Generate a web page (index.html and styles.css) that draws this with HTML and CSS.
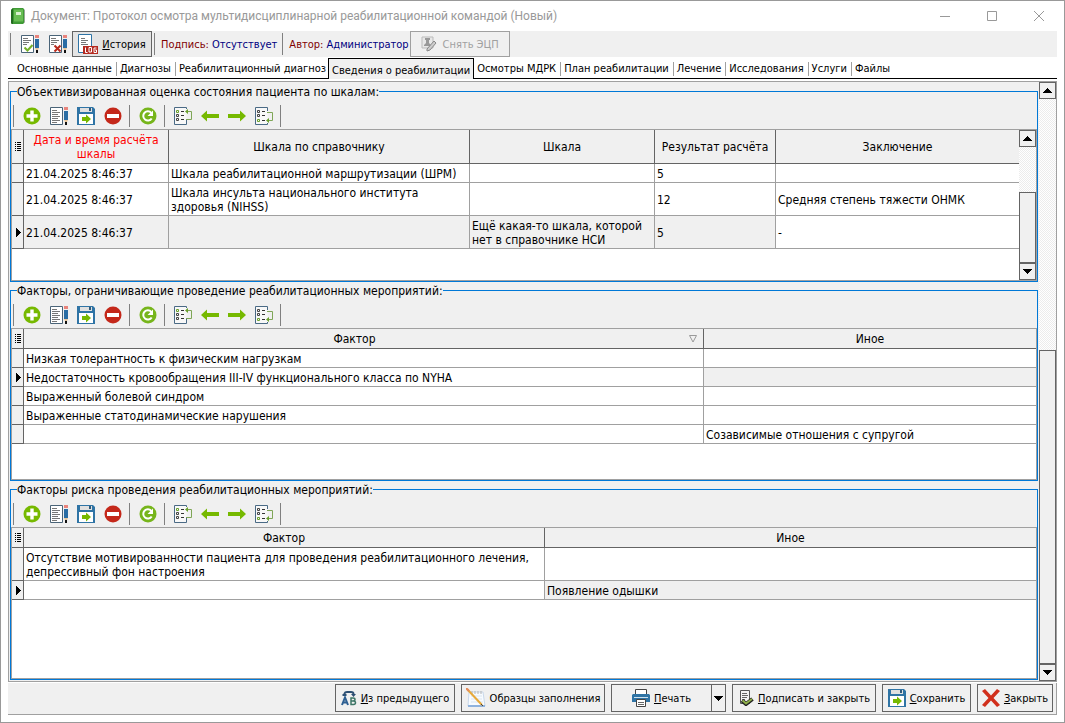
FILE: index.html
```html
<!DOCTYPE html>
<html lang="ru">
<head>
  <meta charset="UTF-8">
  <meta name="viewport" content="width=device-width, initial-scale=1.0">
  <title>Документ: Протокол осмотра</title>
  <link rel="stylesheet" href="styles.css">
</head>
<body>
  <!-- Icon set -->
  <svg class="icon-set" aria-hidden="true">
    <symbol id="i-add" viewBox="0 0 18 18">
      <circle cx="9" cy="9" r="8.5" fill="#76b900"/>
      <path d="M7.300 3.500h3.400v3.800h3.800v3.400h-3.800v3.800H7.300v-3.800H3.500V7.300h3.800z" fill="#fff"/>
    </symbol>
    <symbol id="i-edit" viewBox="0 0 18 18">
      <path d="M.5.5h12v17H.5z" fill="#fff" stroke="#4a6478"/>
      <path d="M2 3.500h5M2 5.500h8M2 7.500h6M2 9.500h8M2 11.500h6M2 13.500h8M2 15.500h5" stroke="#777"/>
      <path d="M14 0h4v3h-4z" fill="#e8847c"/>
      <path d="M14 4h4v9h-4z" fill="#2a6da4"/>
      <path d="M14 13h4l-1 2h-2z" fill="#e9c79a"/>
      <path d="M15 15h2v3h-2z" fill="#111"/>
    </symbol>
    <symbol id="i-edit-ok" viewBox="0 0 18 18">
      <path d="M.5.5h12v17H.5z" fill="#fff" stroke="#4a6478"/>
      <path d="M2 3.500h5M2 5.500h8M2 7.500h6M2 9.500h4" stroke="#777"/>
      <path d="M3.500 12.500l3 3 5-5.500" fill="none" stroke="#76b02a" stroke-width="2"/>
      <path d="M14 0h4v3h-4z" fill="#e8847c"/>
      <path d="M14 4h4v9h-4z" fill="#2a6da4"/>
      <path d="M14 13h4l-1 2h-2z" fill="#e9c79a"/>
      <path d="M15 15h2v3h-2z" fill="#111"/>
    </symbol>
    <symbol id="i-edit-no" viewBox="0 0 18 18">
      <path d="M.5.5h12v17H.5z" fill="#fff" stroke="#4a6478"/>
      <path d="M2 3.500h5M2 5.500h8M2 7.500h6M2 9.500h3" stroke="#777"/>
      <path d="M5.500 10.500l6 6M11.500 10.500l-6 6" stroke="#b82a1c" stroke-width="2"/>
      <path d="M14 0h4v3h-4z" fill="#e8847c"/>
      <path d="M14 4h4v9h-4z" fill="#2a6da4"/>
      <path d="M14 13h4l-1 2h-2z" fill="#e9c79a"/>
      <path d="M15 15h2v3h-2z" fill="#111"/>
    </symbol>
    <symbol id="i-save" viewBox="0 0 18 18">
      <path d="M0 0h16l2 2v16H0z" fill="#2f74a5"/>
      <path d="M3 1h12v4H3z" fill="#e0e0e0"/>
      <path d="M12 1h2v3h-2z" fill="#2f5a7a"/>
      <path d="M2 7h14v10H2z" fill="#fff"/>
      <path d="M5 10h4V7.500l5 4.500-5 4.500V14H5z" fill="#76b900"/>
    </symbol>
    <symbol id="i-remove" viewBox="0 0 18 18">
      <circle cx="9" cy="9" r="8.500" fill="#c4281a"/>
      <path d="M3 7h12v4H3z" fill="#fff"/>
    </symbol>
    <symbol id="i-refresh" viewBox="0 0 18 18">
      <circle cx="9" cy="9" r="8.500" fill="#76b51b"/>
      <path d="M12.700 11.500a4.600 4.600 0 1 1-.4-5.600" fill="none" stroke="#fff" stroke-width="2"/>
      <path d="M14 3.500v5.500H8.500z" fill="#fff"/>
    </symbol>
    <symbol id="i-first" viewBox="0 0 18 18">
      <path d="M12.500 2V.5H.5v17h12V13" fill="#f8f8f8" stroke="#4a6a85"/>
      <path d="M2.500 3.500h2v2h-2z" fill="none" stroke="#6aa12c"/>
      <path d="M2.500 7.500h2v2h-2zM2.500 11.500h2v2h-2z" fill="none" stroke="#444"/>
      <path d="M7 4.500h3M7 8.500h3M7 12.500h3" stroke="#333"/>
      <path d="M13 4.500h4.500v8H12" fill="none" stroke="#7fa657"/>
      <path d="M14 2v5l-3-2.500z" fill="#6aa12c"/>
    </symbol>
    <symbol id="i-last" viewBox="0 0 18 18">
      <path d="M12.500 4V.5H.5v17h12V16" fill="#f8f8f8" stroke="#4a6a85"/>
      <path d="M2.500 3.500h2v2h-2zM2.500 7.500h2v2h-2z" fill="none" stroke="#444"/>
      <path d="M2.500 12.500h2v2h-2z" fill="none" stroke="#6aa12c"/>
      <path d="M7 4.500h3M7 8.500h3M7 13.500h3" stroke="#333"/>
      <path d="M12 5.500h5.500v8H13" fill="none" stroke="#7fa657"/>
      <path d="M14 11v5l-3-2.500z" fill="#6aa12c"/>
    </symbol>
    <symbol id="i-prev" viewBox="0 0 18 18">
      <path d="M0 9l6-5.500v3.500h12v4H6v3.500z" fill="#76b900"/>
    </symbol>
    <symbol id="i-next" viewBox="0 0 18 18">
      <path d="M18 9l-6-5.500v3.500H0v4h12v3.500z" fill="#76b900"/>
    </symbol>
    <symbol id="i-log" viewBox="0 0 20 20">
      <path d="M13.500 12V.5H.5v18H5" fill="#fff" stroke="#2f74a5"/>
      <path d="M3 4.500h4M3 6.500h7M3 8.500h5M3 10.500h7" stroke="#777"/>
      <path d="M5 12h15v8H5z" fill="#b52a20"/>
      <path d="M7.500 13.500v5h2M11 13.500h2.500v4.500H11zM18.500 14H16v4.500h2.500V16H17" fill="none" stroke="#fff"/>
    </symbol>
    <symbol id="i-up" viewBox="0 0 9 5"><path d="M4 0h1v1h1v1h1v1h1v1h1v1H0V4h1V3h1V2h1V1h1z"/></symbol>
    <symbol id="i-down" viewBox="0 0 9 5"><path d="M0 0h9v1H8v1H7v1H6v1H5v1H4V4H3V3H2V2H1V1H0z"/></symbol>
    <symbol id="i-row" viewBox="0 0 5 9"><path d="M0 0h1v1h1v1h1v1h1v1h1v1H4v1H3v1H2v1H1v1H0z"/></symbol>
    <symbol id="i-list" viewBox="0 0 6 9"><path d="M0 .5h1M2 .5h4M0 2.500h1M2 2.500h4M0 4.500h1M2 4.500h4M0 6.500h1M2 6.500h4M0 8.500h1M2 8.500h4" stroke="#000"/></symbol>
  </svg>

  <div class="window">
    <header class="titlebar">
      <svg class="app-icon" viewBox="0 0 16 16">
        <path d="M1 2l2-2h10l1 1v14l-1 1H2l-1-1z" fill="#3f9a35"/>
        <path d="M1 2l2-2v16H2l-1-1z" fill="#226b20"/>
        <path d="M4 1.500h9v12H4z" fill="#69bd54"/>
        <path d="M6 4h5v3H6z" fill="#d9f0cf"/>
        <path d="M14.500 1.500v13l-1 1" fill="none" stroke="#9aa898"/>
      </svg>
      <span class="title">Документ: Протокол осмотра мультидисциплинарной реабилитационной командой (Новый)</span>
      <div class="window-buttons">
        <button aria-label="Свернуть"><svg viewBox="0 0 10 10"><path d="M0 5.500h10"/></svg></button>
        <button aria-label="Развернуть"><svg viewBox="0 0 10 10"><path d="M.5.5h9v9h-9z"/></svg></button>
        <button aria-label="Закрыть окно"><svg viewBox="0 0 10 10"><path d="M0 0l10 10M10 0L0 10"/></svg></button>
      </div>
    </header>

    <div class="main-toolbar">
      <i class="sep"></i>
      <button class="tool wide" aria-label="Проверить"><svg><use href="#i-edit-ok"/></svg></button>
      <button class="tool wide" aria-label="Отклонить"><svg><use href="#i-edit-no"/></svg></button>
      <button class="btn history"><svg class="i20"><use href="#i-log"/></svg><span><u>И</u>стория</span></button>
      <i class="sep"></i>
      <span class="info">Подпись: <b>Отсутствует</b></span>
      <i class="sep"></i>
      <span class="info author">Автор: <b>Администратор</b></span>
      <button class="btn unsign" disabled>
        <svg class="i16" viewBox="0 0 16 16">
          <path d="M1 1h11v11H1z" fill="#e8e8e8" stroke="#bbb"/>
          <path d="M4 2h5v2H8v3l2 2v1H3V9l2-2V4H4z" fill="#999"/>
          <path d="M6 13l7-8 2 2-6 7-3 1z" fill="#ccc" stroke="#888"/>
        </svg>
        <span>Снять ЭЦП</span>
      </button>
    </div>

    <nav class="tabs">
      <button>Основные данные</button>
      <button>Диагнозы</button>
      <button class="before-active">Реабилитационный диагноз</button>
      <button class="active">Сведения о реабилитации</button>
      <button>Осмотры МДРК</button>
      <button>План реабилитации</button>
      <button>Лечение</button>
      <button>Исследования</button>
      <button>Услуги</button>
      <button>Файлы</button>
    </nav>

    <main class="panel">
      <div class="groups">
        <fieldset class="group">
          <legend>Объективизированная оценка состояния пациента по шкалам:</legend>
          <div class="grid-toolbar">
            <i class="sep"></i>
            <button class="tool" aria-label="Добавить"><svg><use href="#i-add"/></svg></button>
            <button class="tool" aria-label="Изменить"><svg><use href="#i-edit"/></svg></button>
            <button class="tool" aria-label="Сохранить"><svg><use href="#i-save"/></svg></button>
            <button class="tool" aria-label="Удалить"><svg><use href="#i-remove"/></svg></button>
            <i class="sep"></i>
            <button class="tool" aria-label="Обновить"><svg><use href="#i-refresh"/></svg></button>
            <i class="sep"></i>
            <button class="tool" aria-label="Первая"><svg><use href="#i-first"/></svg></button>
            <button class="tool" aria-label="Предыдущая"><svg><use href="#i-prev"/></svg></button>
            <button class="tool" aria-label="Следующая"><svg><use href="#i-next"/></svg></button>
            <button class="tool" aria-label="Последняя"><svg><use href="#i-last"/></svg></button>
            <i class="sep"></i>
          </div>
          <div class="grid">
            <div class="grid-body">
              <table>
                <colgroup><col class="c-mark"><col class="c-date"><col class="c-ref"><col class="c-scale"><col class="c-result"><col></colgroup>
                <thead>
                  <tr>
                    <th><svg class="list"><use href="#i-list"/></svg></th>
                    <th class="required">Дата и время расчёта шкалы</th>
                    <th>Шкала по справочнику</th>
                    <th>Шкала</th>
                    <th>Результат расчёта</th>
                    <th>Заключение</th>
                  </tr>
                </thead>
                <tbody>
                  <tr>
                    <td></td>
                    <td>21.04.2025 8:46:37</td>
                    <td>Шкала реабилитационной маршрутизации (ШРМ)</td>
                    <td></td>
                    <td>5</td>
                    <td></td>
                  </tr>
                  <tr>
                    <td></td>
                    <td>21.04.2025 8:46:37</td>
                    <td>Шкала инсульта национального института<br>здоровья (NIHSS)</td>
                    <td></td>
                    <td>12</td>
                    <td>Средняя степень тяжести ОНМК</td>
                  </tr>
                  <tr class="current">
                    <td><svg class="mark"><use href="#i-row"/></svg></td>
                    <td>21.04.2025 8:46:37</td>
                    <td></td>
                    <td>Ещё какая-то шкала, которой<br>нет в справочнике НСИ</td>
                    <td>5</td>
                    <td class="focus">-</td>
                  </tr>
                </tbody>
              </table>
            </div>
            <div class="scrollbar inner">
              <button aria-label="Вверх"><svg><use href="#i-up"/></svg></button>
              <div class="track"></div>
              <div class="thumb"></div>
              <button aria-label="Вниз"><svg><use href="#i-down"/></svg></button>
            </div>
          </div>
        </fieldset>

        <fieldset class="group">
          <legend>Факторы, ограничивающие проведение реабилитационных мероприятий:</legend>
          <div class="grid-toolbar">
            <i class="sep"></i>
            <button class="tool" aria-label="Добавить"><svg><use href="#i-add"/></svg></button>
            <button class="tool" aria-label="Изменить"><svg><use href="#i-edit"/></svg></button>
            <button class="tool" aria-label="Сохранить"><svg><use href="#i-save"/></svg></button>
            <button class="tool" aria-label="Удалить"><svg><use href="#i-remove"/></svg></button>
            <i class="sep"></i>
            <button class="tool" aria-label="Обновить"><svg><use href="#i-refresh"/></svg></button>
            <i class="sep"></i>
            <button class="tool" aria-label="Первая"><svg><use href="#i-first"/></svg></button>
            <button class="tool" aria-label="Предыдущая"><svg><use href="#i-prev"/></svg></button>
            <button class="tool" aria-label="Следующая"><svg><use href="#i-next"/></svg></button>
            <button class="tool" aria-label="Последняя"><svg><use href="#i-last"/></svg></button>
            <i class="sep"></i>
          </div>
          <div class="grid">
            <div class="grid-body">
              <table>
                <colgroup><col class="c-mark"><col class="c-limit"><col></colgroup>
                <thead>
                  <tr>
                    <th><svg class="list"><use href="#i-list"/></svg></th>
                    <th class="sorted">Фактор<svg class="sort" viewBox="0 0 8 8"><path d="M.5.5h7L4 7z"/></svg></th>
                    <th>Иное</th>
                  </tr>
                </thead>
                <tbody>
                  <tr><td></td><td>Низкая толерантность к физическим нагрузкам</td><td></td></tr>
                  <tr class="current">
                    <td><svg class="mark"><use href="#i-row"/></svg></td>
                    <td class="focus">Недостаточность кровообращения III-IV функционального класса по NYHA</td>
                    <td></td>
                  </tr>
                  <tr><td></td><td>Выраженный болевой синдром</td><td></td></tr>
                  <tr><td></td><td>Выраженные статодинамические нарушения</td><td></td></tr>
                  <tr><td></td><td></td><td>Созависимые отношения с супругой</td></tr>
                </tbody>
              </table>
            </div>
          </div>
        </fieldset>

        <fieldset class="group">
          <legend>Факторы риска проведения реабилитационных мероприятий:</legend>
          <div class="grid-toolbar">
            <i class="sep"></i>
            <button class="tool" aria-label="Добавить"><svg><use href="#i-add"/></svg></button>
            <button class="tool" aria-label="Изменить"><svg><use href="#i-edit"/></svg></button>
            <button class="tool" aria-label="Сохранить"><svg><use href="#i-save"/></svg></button>
            <button class="tool" aria-label="Удалить"><svg><use href="#i-remove"/></svg></button>
            <i class="sep"></i>
            <button class="tool" aria-label="Обновить"><svg><use href="#i-refresh"/></svg></button>
            <i class="sep"></i>
            <button class="tool" aria-label="Первая"><svg><use href="#i-first"/></svg></button>
            <button class="tool" aria-label="Предыдущая"><svg><use href="#i-prev"/></svg></button>
            <button class="tool" aria-label="Следующая"><svg><use href="#i-next"/></svg></button>
            <button class="tool" aria-label="Последняя"><svg><use href="#i-last"/></svg></button>
            <i class="sep"></i>
          </div>
          <div class="grid">
            <div class="grid-body">
              <table>
                <colgroup><col class="c-mark"><col class="c-risk"><col></colgroup>
                <thead>
                  <tr>
                    <th><svg class="list"><use href="#i-list"/></svg></th>
                    <th>Фактор</th>
                    <th>Иное</th>
                  </tr>
                </thead>
                <tbody>
                  <tr>
                    <td></td>
                    <td>Отсутствие мотивированности пациента для проведения реабилитационного лечения,<br>депрессивный фон настроения</td>
                    <td></td>
                  </tr>
                  <tr class="current">
                    <td><svg class="mark"><use href="#i-row"/></svg></td>
                    <td class="focus"></td>
                    <td>Появление одышки</td>
                  </tr>
                </tbody>
              </table>
            </div>
          </div>
        </fieldset>
      </div>

      <div class="scrollbar outer">
        <button aria-label="Вверх"><svg><use href="#i-up"/></svg></button>
        <div class="track"></div>
        <div class="thumb"></div>
        <button aria-label="Вниз"><svg><use href="#i-down"/></svg></button>
      </div>
    </main>

    <footer class="actions">
      <button class="btn previous">
        <svg class="i16" viewBox="0 0 16 16">
          <path d="M3.500 5V3.500Q4 2 6 2h4q2.500 0 2.500 2" fill="none" stroke="#2d4f73" stroke-width="2"/>
          <path d="M10 4h5l-2.500 3zM1.500 4h4v2h-4z" fill="#2d4f73"/>
          <path d="M1 15l3-7.500L7 15M2 12.500h4" fill="none" stroke="#2d5f92" stroke-width="2"/>
          <path d="M10 8v6.500h2.500q2 0 2-1.700t-2-1.800H10h2q2 0 2-1.500T12 8z" fill="none" stroke="#3d7566" stroke-width="1.500"/>
        </svg>
        <span><u>И</u>з предыдущего</span>
      </button>
      <button class="btn samples">
        <svg class="i20" viewBox="0 0 20 20">
          <path d="M3 4h14l2 14H2z" fill="#f7fbff" stroke="#c9d8ea"/>
          <path d="M2 17h17v2H2z" fill="#8fb2dd"/>
          <path d="M5 8h11M5 11h11M5 14h12" stroke="#dbe5f0"/>
          <path d="M6 3v3M9 3v3M12 3v3M15 3v3" stroke="#b5b5b5"/>
          <path d="M1 1l15 16" stroke="#e7a93a" stroke-width="2"/>
          <path d="M0 0l3 3" stroke="#e58a5c" stroke-width="2"/>
          <path d="M15 16l2 2" stroke="#444"/>
        </svg>
        <span>Образцы заполнения</span>
      </button>
      <div class="split">
        <button class="btn print">
          <svg class="i18" viewBox="0 0 18 18">
            <path d="M3.500.5h11v6h-11z" fill="#fff" stroke="#444"/>
            <path d="M1 5h16l1 1v7H0V6z" fill="#2f74a5"/>
            <path d="M2 8.500h14" stroke="#cfe2ef"/>
            <path d="M4.500 10.500h9v7h-9z" fill="#fff" stroke="#444"/>
            <path d="M6 13.500h6M6 15.500h6" stroke="#666"/>
          </svg>
          <span><u>П</u>ечать</span>
        </button>
        <button class="btn drop" aria-label="Варианты печати"><svg><use href="#i-down"/></svg></button>
      </div>
      <button class="btn sign">
        <svg class="i16" viewBox="0 0 16 16">
          <path d="M2.500.5h9v13h-9z" fill="#f4f4f4" stroke="#555"/>
          <path d="M4 3.500h5M4 5.500h6M4 7.500h5M4 9.500h3" stroke="#666"/>
          <path d="M4 10.500l4 3.500 6.500-5" fill="none" stroke="#222" stroke-width="4"/>
          <path d="M4.500 10.500L8 13.500l6-4.500" fill="none" stroke="#8fb04a" stroke-width="2"/>
        </svg>
        <span><u>П</u>одписать и закрыть</span>
      </button>
      <button class="btn save"><svg class="i18"><use href="#i-save"/></svg><span><u>С</u>охранить</span></button>
      <button class="btn close">
        <svg class="i18" viewBox="0 0 18 18"><path d="M3 0l6 6.500L15 0l3 2-6.500 7 6.500 7-3 2-6-6.500L3 18l-3-2 6.500-7L0 2z" fill="#d12f1c"/></svg>
        <span><u>З</u>акрыть</span>
      </button>
    </footer>
  </div>
</body>
</html>
```

FILE: styles.css
```css
* {
  box-sizing: border-box;
}
body {
  margin: 0;
  font-family: Tahoma, "DejaVu Sans Condensed", "DejaVu Sans", sans-serif;
  font-size: 12px;
  line-height: 14px;
  color: #000;
  background: #fff;
}
button {
  font: inherit;
  color: inherit;
  margin: 0;
  padding: 0;
  border: 0;
  background: none;
}
svg {
  display: block;
  flex: none;
}
.icon-set {
  display: none;
}
.window {
  display: flex;
  flex-direction: column;
  height: 100vh;
  min-height: 600px;
  padding: 0 7px 7px;
  border: 1px solid #999;
}

/* title */
.titlebar {
  display: flex;
  align-items: center;
  height: 30px;
  padding-left: 2px;
  font-family: "Segoe UI", Roboto, "Open Sans", sans-serif;
  color: #999;
}
.app-icon {
  width: 16px;
  height: 16px;
}
.title {
  flex: 1;
  margin-left: 5px;
  white-space: nowrap;
}
.window-buttons {
  display: flex;
  margin-right: -5px;
}
.window-buttons button {
  display: flex;
  align-items: center;
  justify-content: center;
  width: 47px;
  height: 30px;
}
.window-buttons svg {
  width: 10px;
  height: 10px;
  fill: none;
  stroke: #999;
}

/* toolbars */
.sep {
  flex: none;
  width: 1px;
  height: 22px;
  background: #808080;
}
.tool {
  display: flex;
  align-items: center;
  justify-content: center;
  width: 27px;
  height: 26px;
}
.tool svg, .i18 {
  width: 18px;
  height: 18px;
}
.i16 {
  width: 16px;
  height: 16px;
}
.i20 {
  width: 20px;
  height: 20px;
}
.btn {
  display: flex;
  align-items: center;
  justify-content: center;
  gap: 4px;
  height: 28px;
  border: 1px solid #646464;
  background: #f0f0f0;
  font-size: 11px;
  white-space: nowrap;
}
.main-toolbar {
  display: flex;
  align-items: center;
  height: 26px;
  padding-left: 2px;
  background: #f0f0f0;
  font-size: 11px;
}
.tool.wide {
  width: 28px;
}
.main-toolbar .sep:first-child {
  margin-right: 5px;
}
.main-toolbar .btn {
  height: 26px;
}
.btn.history {
  width: 80px;
  margin-right: 2px;
  background: #e4e4e4;
}
.info {
  padding: 2px 5px 0 6px;
  color: #800000;
  white-space: nowrap;
}
.info.author {
  padding-right: 1px;
}
.info b {
  font-weight: normal;
  color: #000080;
}
.btn.unsign {
  width: 100px;
  gap: 6px;
  border-color: #a0a0a0;
  color: #a0a0a0;
}
.btn span {
  padding-top: 1px;
}

/* tabs */
.tabs {
  display: flex;
  align-items: flex-end;
  height: 22px;
  margin-bottom: 2px;
  padding: 1px 0 0 6px;
  border-bottom: 1px solid #000;
  font-size: 11px;
}
.tabs button {
  height: 14px;
  margin-bottom: 2px;
  padding: 0 4px 0 3px;
  border-right: 1px solid #a0a0a0;
  white-space: nowrap;
}
.tabs .before-active, .tabs button:last-child {
  border-right: 0;
}
.tabs .before-active {
  padding-right: 2px;
}
.tabs .active {
  height: 21px;
  margin-bottom: -1px;
  padding: 3px 3px 0;
  border: 1px solid #000;
  border-bottom: 0;
  background: #f0f0f0;
}

/* groups */
.panel {
  display: flex;
  flex: 1;
  min-height: 0;
  border: 1px solid #a0a0a0;
  background: #f0f0f0;
}
.groups {
  display: flex;
  flex: 1;
  flex-direction: column;
  gap: 1px;
  min-width: 0;
  padding: 2px 1px 1px;
}
.group {
  display: flex;
  flex: 1 1 0;
  flex-direction: column;
  min-width: 0;
  min-height: 0;
  margin: 0;
  padding: 0;
  border: 1px solid #0078d7;
}
.group legend {
  margin-left: 6px;
  padding: 2px 0 0;
  line-height: 12px;
}
.grid-toolbar {
  display: flex;
  align-items: center;
  height: 31px;
  padding: 5px 0 0 2px;
}
.grid-toolbar .sep {
  margin: 0 4px 0 3px;
}
.grid-toolbar .sep:first-child {
  margin-left: 0;
}
.grid {
  display: flex;
  flex: 1;
  min-height: 0;
  border: 1px solid #a0a0a0;
  background: #fff;
}
.grid-body {
  flex: 1;
  min-width: 0;
  overflow: hidden;
}
table {
  width: 100%;
  table-layout: fixed;
  border-collapse: separate;
  border-spacing: 0;
}
.c-mark { width: 12px; }
.c-date { width: 145px; }
.c-ref { width: 301px; }
.c-scale { width: 185px; }
.c-result { width: 121px; }
.c-limit { width: 680px; }
.c-risk { width: 521px; }
th {
  padding: 3px 2px 2px;
  border-right: 1px solid #646464;
  border-bottom: 1px solid #646464;
  background: #f0f0f0;
  font-weight: normal;
}
td {
  height: 19px;
  padding: 3px 2px 1px;
  border-right: 1px solid #a0a0a0;
  border-bottom: 1px solid #a0a0a0;
  white-space: nowrap;
}
th:last-child, td:last-child {
  border-right: 0;
}
td:first-child {
  border-color: #646464;
}
td:first-child, .current td {
  background: #f0f0f0;
}
.current .focus {
  background: #fff;
}
th:first-child, td:first-child {
  padding: 0 0 0 3px;
}
.required {
  color: #f00;
}
.list {
  width: 6px;
  height: 9px;
}
.mark {
  width: 5px;
  height: 9px;
  margin-left: 1px;
}
.sorted {
  position: relative;
  padding-right: 20px;
}
.sort {
  position: absolute;
  top: 6px;
  right: 6px;
  width: 8px;
  height: 8px;
  fill: none;
  stroke: #999;
}

/* scrollbars */
.scrollbar {
  display: flex;
  flex: none;
  flex-direction: column;
  width: 17px;
}
.scrollbar button {
  display: flex;
  flex: none;
  align-items: center;
  justify-content: center;
  height: 17px;
  border: 1px solid #646464;
  background: #f0f0f0;
}
.scrollbar svg, .drop svg {
  width: 9px;
  height: 5px;
}
.track {
  background: repeating-conic-gradient(#fff 0 25%, #ececec 0 50%) 0 0 / 2px 2px;
}
.thumb {
  border: 1px solid #646464;
  background: #f0f0f0;
}
.outer .track { flex: 252; }
.outer .thumb { flex: 313; }
.inner .track { flex: 46; }
.inner .thumb { flex: 70; }

/* bottom buttons */
.actions {
  display: flex;
  align-items: flex-start;
  justify-content: flex-end;
  gap: 6px;
  height: 32px;
  margin-top: 1px;
  padding: 1px 3px 0 0;
  border-right: 1px solid #a0a0a0;
  border-bottom: 1px solid #a0a0a0;
  background: #f0f0f0;
}
.split {
  display: flex;
}
.previous { width: 120px; }
.samples { width: 144px; }
.print { width: 101px; }
.drop { width: 15px; margin-left: -1px; }
.sign { width: 144px; }
.save { width: 89px; }
.close { width: 76px; }
```
